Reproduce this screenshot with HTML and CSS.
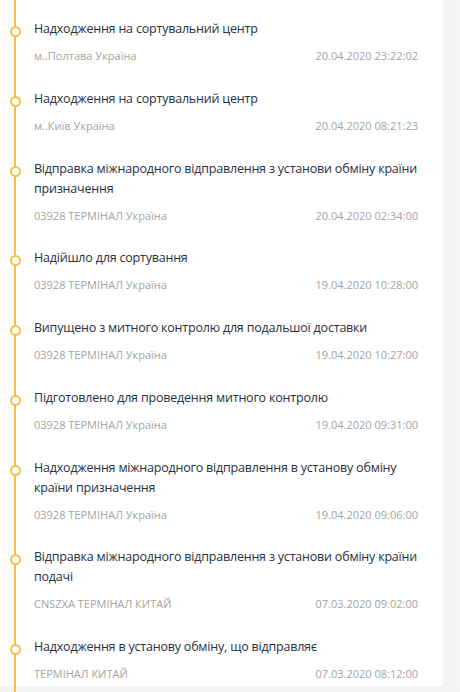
FILE: index.html
```
<!DOCTYPE html>
<html lang="uk">
<head>
  <meta charset="UTF-8">
  <meta name="viewport" content="width=device-width, initial-scale=1.0">
  <title>Відстеження</title>
  <link rel="stylesheet" href="styles.css">
</head>
<body>
  <div class="page">
    <div class="panel">
      <!-- Історія відправлення -->
      <ul class="timeline">
        <li class="event">
          <div class="event-title">Надходження на сортувальний центр</div>
          <div class="event-meta"><span>м..Полтава Україна</span><span>20.04.2020 23:22:02</span></div>
        </li>
        <li class="event">
          <div class="event-title">Надходження на сортувальний центр</div>
          <div class="event-meta"><span>м..Київ Україна</span><span>20.04.2020 08:21:23</span></div>
        </li>
        <li class="event">
          <div class="event-title">Відправка міжнародного відправлення з установи обміну країни призначення</div>
          <div class="event-meta"><span>03928 ТЕРМІНАЛ Україна</span><span>20.04.2020 02:34:00</span></div>
        </li>
        <li class="event">
          <div class="event-title">Надійшло для сортування</div>
          <div class="event-meta"><span>03928 ТЕРМІНАЛ Україна</span><span>19.04.2020 10:28:00</span></div>
        </li>
        <li class="event">
          <div class="event-title">Випущено з митного контролю для подальшої доставки</div>
          <div class="event-meta"><span>03928 ТЕРМІНАЛ Україна</span><span>19.04.2020 10:27:00</span></div>
        </li>
        <li class="event">
          <div class="event-title">Підготовлено для проведення митного контролю</div>
          <div class="event-meta"><span>03928 ТЕРМІНАЛ Україна</span><span>19.04.2020 09:31:00</span></div>
        </li>
        <li class="event">
          <div class="event-title">Надходження міжнародного відправлення в установу обміну країни призначення</div>
          <div class="event-meta"><span>03928 ТЕРМІНАЛ Україна</span><span>19.04.2020 09:06:00</span></div>
        </li>
        <li class="event">
          <div class="event-title">Відправка міжнародного відправлення з установи обміну країни подачі</div>
          <div class="event-meta"><span>CNSZXA ТЕРМІНАЛ КИТАЙ</span><span>07.03.2020 09:02:00</span></div>
        </li>
        <li class="event">
          <div class="event-title">Надходження в установу обміну, що відправляє</div>
          <div class="event-meta"><span>ТЕРМІНАЛ КИТАЙ</span><span>07.03.2020 08:12:00</span></div>
        </li>
      </ul>
    </div>
    <div class="side"></div>
  </div>
  <div class="bottom-shade"></div>
</body>
</html>
```

FILE: styles.css
```
body {
  margin: 0;
  padding: 0;
  background: #f4f4f4;
  font-family: 'Open Sans', sans-serif;
  overflow: hidden;
}

.page {
  display: flex;
  height: 692px;
}

.panel {
  width: 443px;
  background: #fff;
  overflow: hidden;
}

.side {
  flex: 1;
  background: linear-gradient(to right, #f2f2f2, #f6f6f6);
}

/* Timeline */
.timeline {
  list-style: none;
  margin: 0;
  padding: 19px 0 0;
  position: relative;
}
.timeline::before {
  content: "";
  position: absolute;
  left: 14px;
  top: 0;
  height: 692px;
  width: 2px;
  background: #f5c04a;
  z-index: 3;
}

.event {
  position: relative;
  padding: 0 25px 22.75px 34px;
}
.event::before {
  content: "";
  position: absolute;
  left: 10px;
  top: 7px;
  width: 7px;
  height: 7px;
  border: 2px solid #f5c04a;
  border-radius: 50%;
  background: #fff;
  z-index: 4;
}

.event-title {
  font-size: 12.5px;
  letter-spacing: -0.2px;
  line-height: 20px;
  color: #27303f;
}

.event-meta {
  display: flex;
  justify-content: space-between;
  margin-top: 7px;
  font-size: 11px;
  line-height: 20px;
  color: #a3a3a3;
}

.bottom-shade {
  position: fixed;
  left: 0;
  right: 0;
  bottom: 0;
  height: 6px;
  background: #f3f3f3;
  z-index: 2;
}
```
